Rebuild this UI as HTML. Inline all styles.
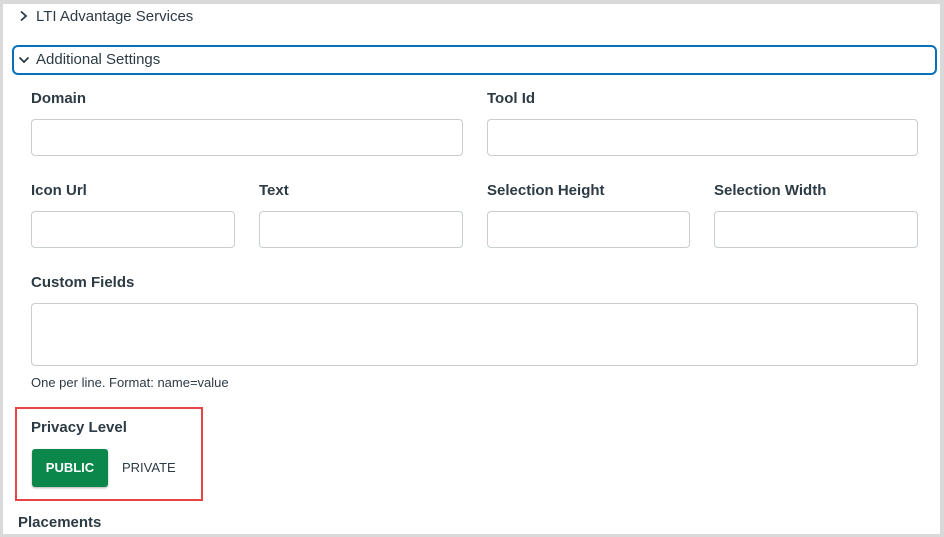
<!DOCTYPE html>
<html><head><style>
*{box-sizing:border-box;margin:0;padding:0}
body{width:944px;height:537px;background:#d9d9d9;font-family:"Liberation Sans",sans-serif;color:#2d3b45;position:relative;overflow:hidden}
.page{position:absolute;left:3px;top:4px;width:937px;height:530px;background:#fff}
.a{position:absolute}
.lbl{position:absolute;font-size:15px;font-weight:bold;color:#2d3b45}
.in{position:absolute;border:1px solid #c7cdd1;border-radius:4px;background:#fff}
</style></head><body>
<div class="page"></div>
<svg class="a" style="left:19px;top:10px" width="10" height="12" viewBox="0 0 10 12"><path d="M2 1.5 L7 6 L2 10.5" fill="none" stroke="#2d3b45" stroke-width="1.8"/></svg>
<div class="a" style="left:36px;top:8px;font-size:15px">LTI Advantage Services</div>
<div class="a" style="left:12px;top:45px;width:925px;height:30px;border:2px solid #0770b8;border-radius:6px"></div>
<svg class="a" style="left:18px;top:55px" width="12" height="10" viewBox="0 0 12 10"><path d="M1.5 2.5 L6 7 L10.5 2.5" fill="none" stroke="#2d3b45" stroke-width="1.8"/></svg>
<div class="a" style="left:36px;top:51px;font-size:15px">Additional Settings</div>
<div class="lbl" style="left:31px;top:90px">Domain</div>
<div class="lbl" style="left:487px;top:90px">Tool Id</div>
<div class="in" style="left:31px;top:119px;width:432px;height:37px"></div>
<div class="in" style="left:487px;top:119px;width:431px;height:37px"></div>
<div class="lbl" style="left:31px;top:182px">Icon Url</div>
<div class="lbl" style="left:259px;top:182px">Text</div>
<div class="lbl" style="left:487px;top:182px">Selection Height</div>
<div class="lbl" style="left:714px;top:182px">Selection Width</div>
<div class="in" style="left:31px;top:211px;width:204px;height:37px"></div>
<div class="in" style="left:259px;top:211px;width:204px;height:37px"></div>
<div class="in" style="left:487px;top:211px;width:203px;height:37px"></div>
<div class="in" style="left:714px;top:211px;width:204px;height:37px"></div>
<div class="lbl" style="left:31px;top:274px">Custom Fields</div>
<div class="in" style="left:31px;top:303px;width:887px;height:63px"></div>
<div class="a" style="left:31px;top:375px;font-size:13px;color:#2d3b45">One per line. Format: name=value</div>
<div class="a" style="left:15px;top:407px;width:188px;height:94px;border:2px solid #e84346"></div>
<div class="lbl" style="left:31px;top:419px">Privacy Level</div>
<div class="a" style="left:32px;top:449px;width:76px;height:38px;background:#0b874b;border-radius:3px;color:#fff;font-size:13px;font-weight:bold;text-align:center;line-height:38px;box-shadow:0 1px 2px rgba(0,0,0,.3)">PUBLIC</div>
<div class="a" style="left:122px;top:460px;font-size:13px">PRIVATE</div>
<div class="lbl" style="left:18px;top:514px">Placements</div>
</body></html>
